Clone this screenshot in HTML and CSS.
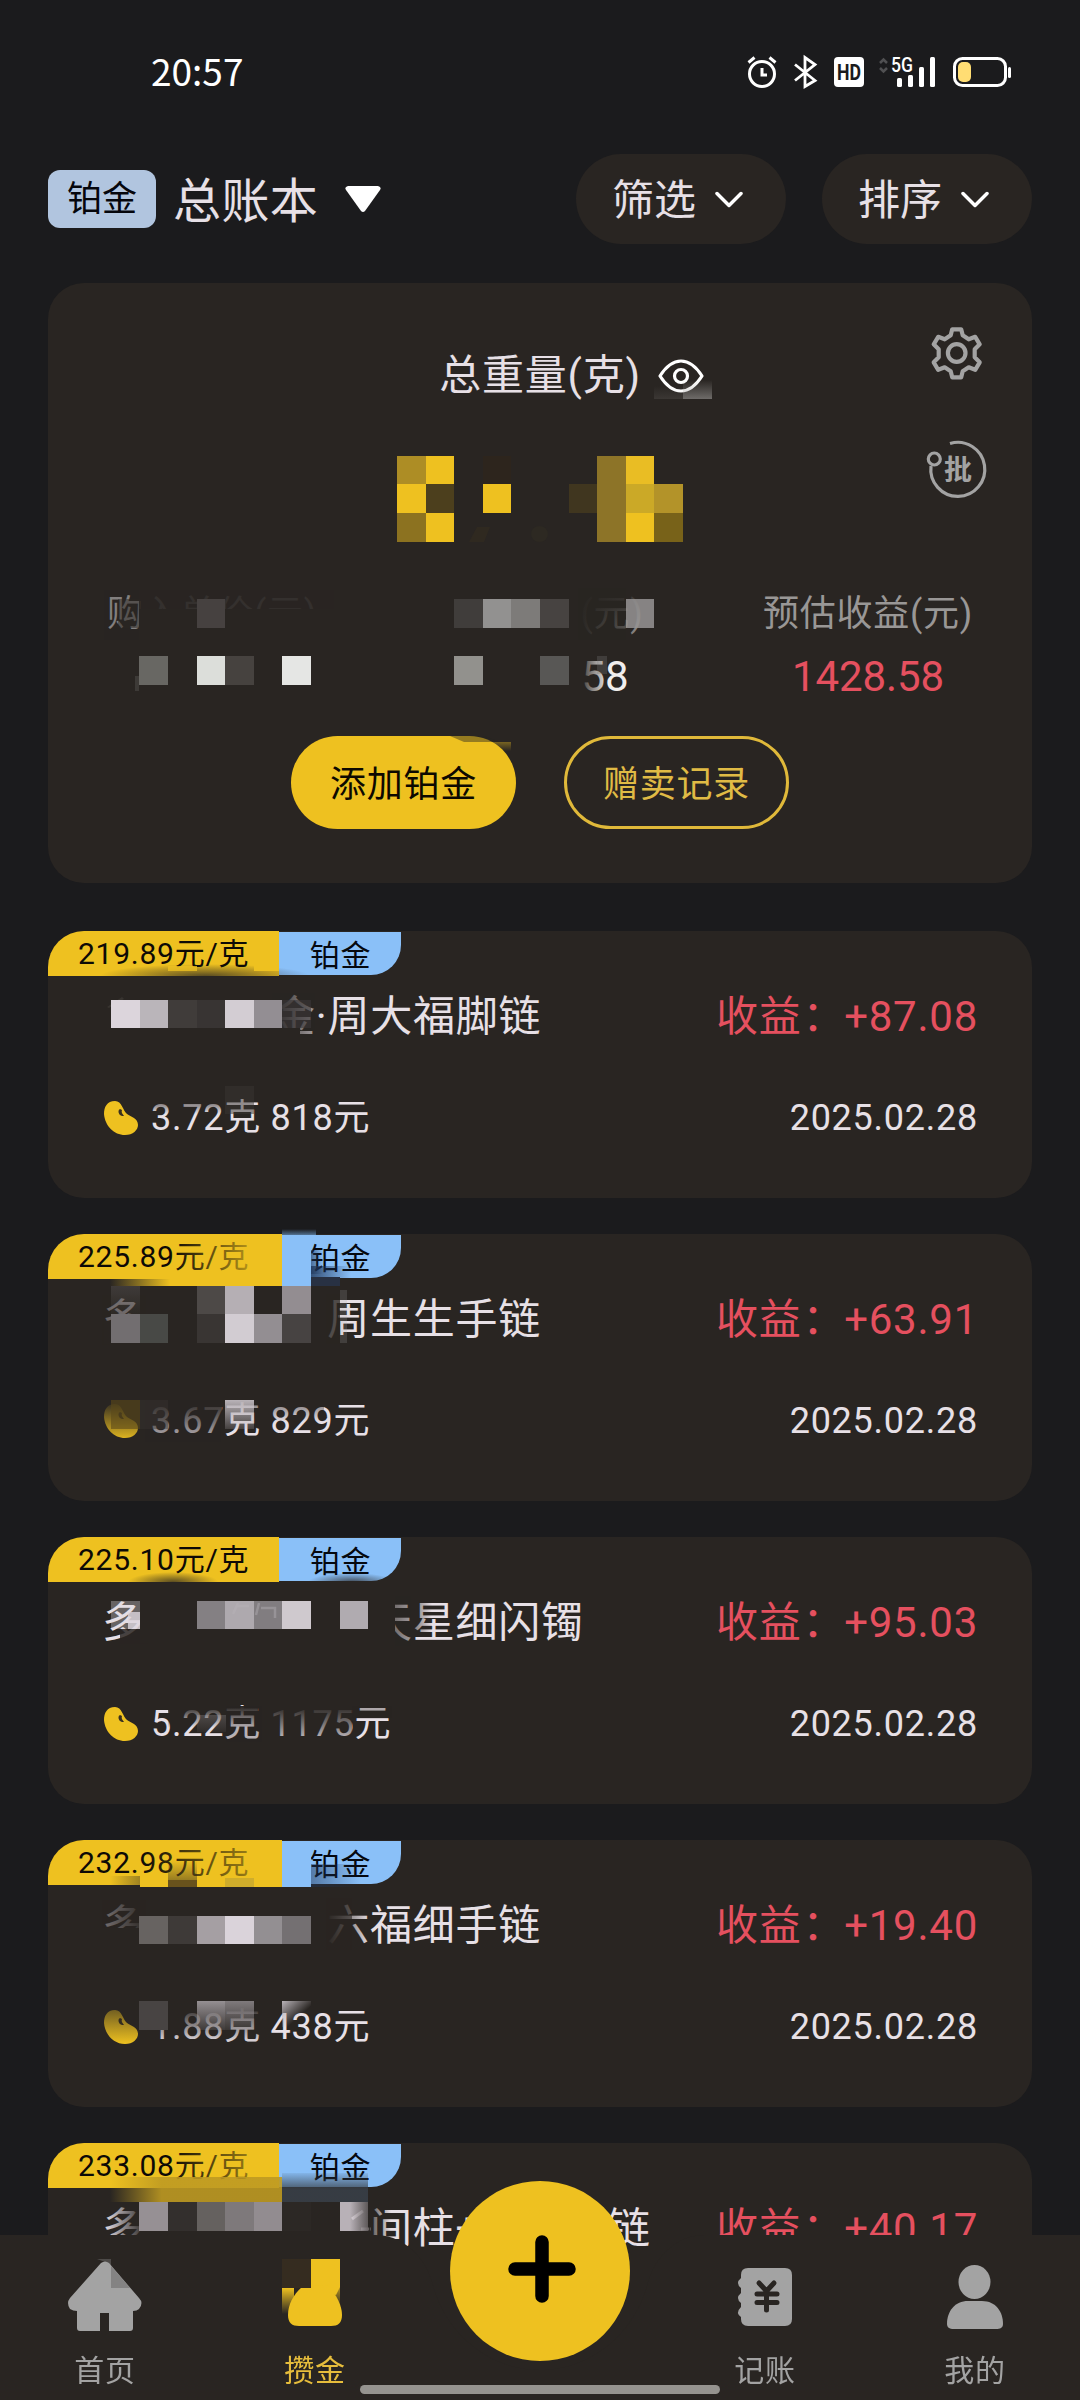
FILE: index.html
```html
<!DOCTYPE html>
<html lang="zh-CN">
<head>
<meta charset="utf-8">
<title>攒金</title>
<link rel="stylesheet" href="styles.css">
</head>
<body>
<svg class="defs" width="0" height="0">
  <defs>
    <linearGradient id="fromLeft"><stop offset="0" stop-color="#292522"/><stop offset="1" stop-color="#292522" stop-opacity="0"/></linearGradient>
    <linearGradient id="fromTop" x1="0" y1="0" x2="0" y2="1"><stop offset="0" stop-color="#292522"/><stop offset="1" stop-color="#292522" stop-opacity="0"/></linearGradient>
    <linearGradient id="fromRight" x1="1" x2="0"><stop offset="0" stop-color="#292522"/><stop offset="1" stop-color="#292522" stop-opacity="0"/></linearGradient>
    <linearGradient id="lightDown" x1="0" y1="0" x2="0" y2="1"><stop offset="0" stop-color="#b9b3b8"/><stop offset="1" stop-color="#b9b3b8" stop-opacity="0.2"/></linearGradient>
    <linearGradient id="lightCorner" x1="0" y1="0" x2=".6" y2=".6"><stop offset="0" stop-color="#b9b3b8"/><stop offset="1" stop-color="#b9b3b8" stop-opacity="0"/></linearGradient>
    <linearGradient id="shade" x1="0" y1="0" x2="0" y2="1"><stop offset="0" stop-color="#292522" stop-opacity="0"/><stop offset="1" stop-color="#292522" stop-opacity=".85"/></linearGradient>
    <radialGradient id="shadow" cx=".5" cy="1" r=".5" gradientTransform="translate(0 -1) scale(1 2)"><stop offset="0" stop-color="#292522" stop-opacity=".75"/><stop offset="1" stop-color="#292522" stop-opacity="0"/></radialGradient>
    <linearGradient id="goldIn"><stop offset="0" stop-color="#eec120" stop-opacity="0"/><stop offset=".35" stop-color="#eec120"/></linearGradient>
    <linearGradient id="goldDimIn"><stop offset="0" stop-color="#be9a22" stop-opacity="0"/><stop offset=".3" stop-color="#be9a22"/></linearGradient>
    <linearGradient id="goldVeil"><stop offset="0" stop-color="#eec120" stop-opacity="0"/><stop offset="1" stop-color="#eec120" stop-opacity=".8"/></linearGradient>
    <linearGradient id="navyIn"><stop offset="0" stop-color="#1f3558"/><stop offset="1" stop-color="#1f3558" stop-opacity="0"/></linearGradient>
    <linearGradient id="navyDown" x1="0" y1="0" x2="0" y2="1"><stop offset="0" stop-color="#394049" stop-opacity=".1"/><stop offset=".6" stop-color="#394049"/></linearGradient>
    <linearGradient id="glow" x1="0" y1="1" x2="0" y2="0"><stop offset="0" stop-color="#5f87b0" stop-opacity=".8"/><stop offset="1" stop-color="#5f87b0" stop-opacity="0"/></linearGradient>
    <linearGradient id="goldDown" x1="0" y1="0" x2="0" y2="1"><stop offset="0" stop-color="#eec120"/><stop offset="1" stop-color="#eec120" stop-opacity="0"/></linearGradient>
    <linearGradient id="whiteUp" x1="0" y1="1" x2="0" y2="0"><stop offset="0" stop-color="#a5a3a1" stop-opacity=".8"/><stop offset="1" stop-color="#a5a3a1" stop-opacity="0"/></linearGradient>
    <symbol id="bean" viewBox="0 0 34 34"><path d="M11 0C3 0 0 6 0 13c1 12 10 21 21 21 8 0 13-5 13-10 0-7-7-8-11-11C19 10 18 0 11 0z" fill="#eec120"/><path d="M16 8c-2 1-2 4 0 6 1 1 3 1 4 1-1-2-3-3-2-6z" fill="#39301f"/></symbol>
    <symbol id="chevron" viewBox="0 0 28 17"><path d="M2 2.500l12 12 12-12" fill="none" stroke="#fff" stroke-width="3.500" stroke-linecap="round" stroke-linejoin="round"/></symbol>
  </defs>
</svg>

<header class="status">
  <span class="clock">20:57</span>
  <svg class="status-icons" viewBox="745 54 270 36">
    <g fill="none" stroke="#fff" stroke-width="3">
      <circle cx="762" cy="74" r="12.500"/><path d="M762 68v7h5M748.500 62.500l6-5M775.500 62.500l-6-5" />
      <path d="M795 64.500l20 16-10 6v-29l10 7-20 16" stroke-width="2.800"/>
      <rect x="954.500" y="58.500" width="51" height="27" rx="8"/>
    </g>
    <rect x="834" y="57" width="30" height="30" rx="4" fill="#fff"/>
    <text class="hd" x="849" y="80" text-anchor="middle" textLength="24" lengthAdjust="spacingAndGlyphs">HD</text>
    <path d="M880 63l3.500-3.500 3.500 3.500M880 68l3.500 3.500 3.500-3.500" fill="none" stroke="#505052" stroke-width="2.500"/>
    <text class="net" x="891" y="72" textLength="22" lengthAdjust="spacingAndGlyphs">5G</text>
    <g fill="#fff"><rect x="897" y="78" width="5" height="9" rx="1.500"/><rect x="908" y="75" width="5" height="12" rx="1.500"/><rect x="919" y="67" width="5" height="20" rx="1.500"/><rect x="930" y="57" width="5" height="30" rx="1.500"/><rect x="1008" y="67" width="3" height="11" rx="1.500"/></g>
    <rect x="958" y="62" width="13" height="20" rx="5" fill="#ffdd73"/>
  </svg>
</header>

<section class="toolbar">
  <span class="metal">铂金</span>
  <span class="book">总账本</span>
  <svg class="triangle" viewBox="0 0 36 27"><path d="M3 0h30q4 1 2 4L20 25q-2 2-4 0L1 4Q-1 1 3 0z" fill="#fff"/></svg>
  <button class="pill first"><span>筛选</span><svg><use href="#chevron"/></svg></button>
  <button class="pill"><span>排序</span><svg><use href="#chevron"/></svg></button>
</section>

<section class="summary">
  <div class="summary-title"><span>总重量(克)</span>
    <svg class="eye" viewBox="0 0 46 34"><path d="M2 17C9 6 16 2 23 2s14 4 21 15C37 28 30 32 23 32S9 28 2 17z" fill="none" stroke="#fff" stroke-width="3.200" stroke-linejoin="round"/><circle cx="23" cy="17" r="6.500" fill="none" stroke="#fff" stroke-width="3.200"/></svg>
  </div>
  <div class="stats">
    <div class="stat"><span class="label">购入单价(元)</span><span class="value"></span></div>
    <div class="stat"><span class="label tail">(元)</span><span class="value tail2">58</span></div>
    <div class="stat"><span class="label">预估收益(元)</span><span class="value red">1428.58</span></div>
  </div>
  <div class="actions"><button class="add">添加铂金</button><button class="log">赠卖记录</button></div>
  <svg class="overlay" viewBox="48 283 984 600">
    <g fill="none" stroke="#a3a3a3" stroke-width="4.200" stroke-linejoin="round">
      <path transform="translate(956.700 353.300)" d="M-4.500-24h9L6-18l6 4 6.500-2.500L23-9l-5 5v8l5 5-4.500 7.500L12 14l-6 4-1.500 6h-9L-6 18l-6-4-6.500 2.500L-23 9l5-5v-8l-5-5 4.500-7.500L-12-14l6-4z"/>
      <circle cx="956.700" cy="353" r="8.800"/>
      <path d="M950 443.500A27 27 0 1 1 931 466" stroke-width="3.200"/><circle cx="934.300" cy="459" r="6" stroke-width="3.200"/>
    </g>
    <text class="batch" x="958" y="480" text-anchor="middle">批</text>
    <rect x="654" y="386" width="29" height="13" fill="url(#whiteUp)" opacity=".18"/><rect x="683" y="380" width="29" height="19" fill="url(#whiteUp)" opacity=".7"/>
    <rect x="397" y="456" width="29" height="28" fill="#ad8d25"/><rect x="426" y="456" width="28" height="28" fill="#eec120"/>
    <rect x="397" y="484" width="29" height="29" fill="#eec120"/><rect x="426" y="484" width="28" height="29" fill="#4c3f1d"/>
    <rect x="397" y="513" width="29" height="29" fill="#8c7220"/><rect x="426" y="513" width="28" height="29" fill="#eec120"/>
    <rect x="483" y="456" width="28" height="28" fill="#2d251d"/><rect x="483" y="484" width="28" height="29" fill="#eec120"/>
    <path d="M469 542l8-15h13l-6 15z" fill="#3a301f" opacity=".4"/><ellipse cx="539.500" cy="534" rx="8.500" ry="8" fill="#2d2922"/>
    <rect x="569" y="484" width="28" height="29" fill="#40361f"/><rect x="597" y="456" width="29" height="86" fill="#8d7428"/>
    <rect x="626" y="456" width="28" height="28" fill="#e9bd24"/><rect x="626" y="484" width="28" height="29" fill="#cba927"/><rect x="626" y="513" width="28" height="29" fill="#eec120"/>
    <rect x="654" y="484" width="29" height="29" fill="#b39329"/><rect x="654" y="513" width="29" height="29" fill="#786219"/>
    <rect x="104" y="590" width="36" height="50" fill="#292522" opacity=".2"/>
    <rect x="139" y="590" width="195" height="50" fill="#292522" opacity=".9"/><rect x="139" y="609" width="195" height="32" fill="#292522"/>
    <rect x="118" y="599" width="22" height="29" fill="#292522" opacity=".5"/><rect x="197" y="599" width="28" height="29" fill="#464140"/>
    <rect x="454" y="599" width="29" height="29" fill="#403d3b"/><rect x="483" y="599" width="28" height="29" fill="#929190"/><rect x="511" y="599" width="29" height="29" fill="#7d7b79"/><rect x="540" y="599" width="29" height="29" fill="#474341"/>
    <rect x="578" y="588" width="70" height="52" fill="url(#fromLeft)"/><rect x="578" y="588" width="70" height="40" fill="url(#fromTop)"/><rect x="578" y="588" width="48" height="52" fill="#292522" opacity=".45"/><rect x="626" y="599" width="28" height="29" fill="#969494" opacity=".85"/>
    <rect x="135" y="676" width="4" height="15" fill="#3d3a37"/>
    <rect x="139" y="656" width="29" height="29" fill="#686763"/><rect x="197" y="656" width="28" height="29" fill="#dcdeda"/><rect x="225" y="656" width="29" height="29" fill="#46423f"/><rect x="282" y="656" width="29" height="29" fill="#e5e6e4"/>
    <rect x="454" y="656" width="29" height="29" fill="#92918d"/><rect x="540" y="656" width="29" height="29" fill="#585755"/>
    <rect x="578" y="656" width="30" height="38" fill="url(#fromLeft)"/><rect x="597" y="656" width="10" height="18" fill="#777" opacity=".3"/>
    <path d="M450 736h34l16 6h-36z" fill="#292522" opacity=".45"/><rect x="483" y="742" width="28" height="9" fill="url(#goldDown)" opacity=".4"/>
  </svg>
</section>

<main class="list">
  <article class="card">
    <div class="tags"><span class="price">219.89元/克</span><span class="kind">铂金</span></div>
    <div class="row title"><span><i class="hide4"></i>金·周大福脚链</span><span class="red">收益<b>：</b>+87.08</span></div>
    <div class="row info"><span><svg class="bean"><use href="#bean"/></svg>3.72克 818元</span><time>2025.02.28</time></div>
    <svg class="overlay" viewBox="48 931 984 267">
      <rect x="100" y="964" width="210" height="12" fill="url(#shadow)"/>
      <rect x="168" y="966" width="29" height="5" fill="#eec120" opacity=".8"/><rect x="254" y="962" width="25" height="9" fill="#eec120"/>
      <rect x="272" y="993" width="44" height="45" fill="url(#fromLeft)"/><rect x="272" y="993" width="43" height="45" fill="#292522" opacity=".35"/><rect x="272" y="1028" width="28" height="12" fill="#292522"/>
      <path d="M107 1007l15-10 2 2-15 9z" fill="#383430"/>
      <rect x="111" y="1000" width="29" height="28" fill="#dcd5dc"/><rect x="140" y="1000" width="28" height="28" fill="#bab5ba"/><rect x="168" y="1000" width="29" height="28" fill="#403c3a"/><rect x="197" y="1000" width="28" height="28" fill="#383433"/><rect x="225" y="1000" width="29" height="28" fill="#d3cdd3"/><rect x="254" y="1000" width="28" height="28" fill="#938e93"/><rect x="282" y="1000" width="29" height="28" fill="#3b3738" opacity=".6"/>
      <rect x="150" y="1098" width="76" height="16" fill="url(#fromTop)" opacity=".8"/><rect x="225" y="1086" width="29" height="28" fill="#393532" opacity=".5"/>
    </svg>
  </article>
  <article class="card">
    <div class="tags"><span class="price">225.89元/克</span><span class="kind">铂金</span></div>
    <div class="row title"><span>多<i class="hide4"></i><i class="dot"></i>周生生手链</span><span class="red">收益<b>：</b>+63.91</span></div>
    <div class="row info"><span><svg class="bean"><use href="#bean"/></svg>3.67克 829元</span><time>2025.02.28</time></div>
    <svg class="overlay" viewBox="48 1234 984 267">
      <rect x="172" y="1238" width="84" height="38" fill="url(#goldVeil)"/><rect x="110" y="1279" width="172" height="7" fill="url(#goldIn)"/>
      <path d="M279 1234h3v52h-3z" fill="#eec120"/><rect x="282" y="1235" width="29" height="51" fill="#8ac0f8"/>
      <rect x="282" y="1229" width="34" height="6" fill="url(#glow)"/>
      <rect x="311" y="1250" width="12" height="24" fill="url(#navyIn)" opacity=".6"/><rect x="311" y="1266" width="40" height="12" fill="url(#navyIn)" opacity=".8"/><rect x="311" y="1277" width="29" height="9" fill="#283143"/>
      <rect x="102" y="1295" width="44" height="50" fill="#292522" opacity=".65"/><rect x="111" y="1286" width="29" height="28" fill="url(#lightDown)" opacity=".15"/><rect x="104" y="1322" width="42" height="22" fill="#292522"/>
      <rect x="197" y="1286" width="28" height="28" fill="#4d4947"/><rect x="225" y="1286" width="29" height="28" fill="#b5afb4"/><rect x="282" y="1286" width="29" height="28" fill="#938d91"/>
      <rect x="111" y="1314" width="29" height="29" fill="#726e70"/><rect x="140" y="1314" width="28" height="29" fill="#484946"/><rect x="197" y="1314" width="28" height="29" fill="#393533"/><rect x="225" y="1314" width="29" height="29" fill="#d2ccd2"/><rect x="254" y="1314" width="28" height="29" fill="#938e92"/><rect x="282" y="1314" width="29" height="29" fill="#474342"/>
      <rect x="326" y="1294" width="14" height="50" fill="#292522" opacity=".8"/><rect x="340" y="1290" width="7" height="53" fill="#aaa" opacity=".2"/>
      <rect x="102" y="1400" width="120" height="42" fill="url(#fromTop)"/><rect x="145" y="1400" width="76" height="42" fill="#292522" opacity=".2"/><rect x="111" y="1400" width="29" height="29" fill="#5c4919" opacity=".6"/><rect x="140" y="1400" width="28" height="29" fill="#393532" opacity=".4"/>
      <rect x="225" y="1400" width="29" height="29" fill="url(#lightDown)"/><rect x="254" y="1400" width="70" height="22" fill="url(#fromTop)" opacity=".6"/>
    </svg>
  </article>
  <article class="card">
    <div class="tags"><span class="price">225.10元/克</span><span class="kind">铂金</span></div>
    <div class="row title"><span>多<i class="hide4"></i><i class="dot"></i><i class="hide1"></i>天星细闪镯</span><span class="red">收益<b>：</b>+95.03</span></div>
    <div class="row info"><span><svg class="bean"><use href="#bean"/></svg>5.22克 1175元</span><time>2025.02.28</time></div>
    <svg class="overlay" viewBox="48 1537 984 267">
      <rect x="128" y="1572" width="90" height="10" fill="url(#shadow)"/><rect x="308" y="1573" width="88" height="9" fill="url(#shadow)"/>
      <rect x="111" y="1601" width="29" height="28" fill="#ddd6dd" opacity=".35"/><rect x="128" y="1612" width="12" height="17" fill="#ddd6dd" opacity=".8"/><rect x="120" y="1629" width="28" height="15" fill="#292522" opacity=".85"/><rect x="140" y="1598" width="8" height="45" fill="#292522"/>
      <rect x="197" y="1601" width="28" height="28" fill="#848083"/><rect x="225" y="1601" width="29" height="28" fill="#aea9ae"/><rect x="254" y="1601" width="28" height="28" fill="#817d80"/><rect x="282" y="1601" width="29" height="28" fill="#cfc9ce"/>
      <path d="M238 1603l-5 11m4-8h12m10-3l-3 12m5-7h14v10" fill="none" stroke="#b9b3b9" stroke-width="2.500" opacity=".4"/>
      <rect x="340" y="1601" width="28" height="28" fill="#b0abb0"/>
      <rect x="368" y="1596" width="45" height="50" fill="url(#fromLeft)"/><rect x="368" y="1596" width="43" height="50" fill="#292522" opacity=".35"/><rect x="368" y="1596" width="27" height="50" fill="#292522"/><rect x="412" y="1596" width="20" height="36" fill="url(#fromLeft)" opacity=".6"/>
      <rect x="168" y="1706" width="90" height="22" fill="url(#fromTop)"/><rect x="197" y="1715" width="29" height="17" fill="url(#lightDown)" opacity=".25"/><rect x="226" y="1706" width="36" height="36" fill="#292522" opacity=".25"/>
      <rect x="268" y="1706" width="84" height="42" fill="url(#fromTop)"/><rect x="352" y="1706" width="40" height="12" fill="#292522" opacity=".3"/>
    </svg>
  </article>
  <article class="card">
    <div class="tags"><span class="price">232.98元/克</span><span class="kind">铂金</span></div>
    <div class="row title"><span>多<i class="hide4"></i><i class="dot"></i>六福细手链</span><span class="red">收益<b>：</b>+19.40</span></div>
    <div class="row info"><span><svg class="bean"><use href="#bean"/></svg>1.88克 438元</span><time>2025.02.28</time></div>
    <svg class="overlay" viewBox="48 1840 984 267">
      <rect x="140" y="1846" width="114" height="34" fill="url(#goldVeil)" opacity=".8"/><rect x="110" y="1876" width="30" height="9" fill="url(#fromRight)" opacity=".4"/>
      <rect x="140" y="1879" width="28" height="8" fill="#eec120"/><rect x="168" y="1860" width="29" height="27" fill="url(#shade)" opacity=".7"/><rect x="168" y="1880" width="29" height="7" fill="#68521c"/><rect x="197" y="1880" width="85" height="7" fill="#eec120"/><rect x="225" y="1878" width="29" height="9" fill="#cfad2b"/>
      <path d="M279 1840h3v47h-3z" fill="#eec120"/><rect x="282" y="1841" width="29" height="46" fill="#8ac0f8"/><rect x="311" y="1864" width="50" height="23" fill="url(#navyIn)" opacity=".5"/>
      <rect x="102" y="1900" width="46" height="50" fill="url(#fromRight)"/><rect x="102" y="1900" width="44" height="50" fill="#292522" opacity=".6"/><rect x="102" y="1928" width="44" height="22" fill="#292522"/>
      <rect x="139" y="1916" width="29" height="28" fill="#676361"/><rect x="168" y="1916" width="29" height="28" fill="#3e3a38"/><rect x="197" y="1916" width="28" height="28" fill="#a59fa3"/><rect x="225" y="1916" width="29" height="28" fill="#dad3da"/><rect x="254" y="1916" width="28" height="28" fill="#938f92"/><rect x="282" y="1916" width="29" height="28" fill="#747072"/>
      <rect x="326" y="1898" width="44" height="52" fill="url(#fromLeft)"/><rect x="326" y="1898" width="26" height="52" fill="#292522" opacity=".6"/>
      <rect x="100" y="2006" width="40" height="38" fill="url(#fromTop)" opacity=".7"/><rect x="145" y="2006" width="118" height="38" fill="url(#fromTop)"/>
      <rect x="139" y="2001" width="29" height="29" fill="#484443"/><rect x="197" y="2001" width="28" height="29" fill="url(#lightDown)" opacity=".75"/><rect x="225" y="2001" width="29" height="29" fill="url(#lightDown)" opacity=".6"/><rect x="282" y="2001" width="29" height="26" fill="url(#lightCorner)"/>
    </svg>
  </article>
  <article class="card">
    <div class="tags"><span class="price">233.08元/克</span><span class="kind">铂金</span></div>
    <div class="row title"><span>多<i class="hide4"></i><i class="dot"></i><i class="hide1"></i>间柱+<i class="hide3"></i>链</span><span class="red">收益<b>：</b>+40.17</span></div>
    <svg class="overlay" viewBox="48 2143 984 267">
      <rect x="170" y="2148" width="84" height="30" fill="url(#goldVeil)" opacity=".8"/>
      <rect x="110" y="2177" width="172" height="25" fill="url(#goldDimIn)" opacity=".9"/>
      <rect x="282" y="2173" width="86" height="29" fill="url(#navyDown)" opacity=".85"/>
      <rect x="104" y="2202" width="42" height="44" fill="url(#fromRight)"/>
      <rect x="139" y="2202" width="29" height="29" fill="#969094"/><rect x="168" y="2202" width="29" height="29" fill="#332f2d"/><rect x="197" y="2202" width="28" height="29" fill="#65615f"/><rect x="225" y="2202" width="29" height="29" fill="#7e797b"/><rect x="254" y="2202" width="28" height="29" fill="#928c90"/><rect x="282" y="2202" width="29" height="29" fill="#2c2825"/>
      <rect x="340" y="2202" width="28" height="29" fill="#b8b1b7"/><path d="M352 2219l11-8M361 2229h10" fill="none" stroke="#ddd5dc" stroke-width="3"/><rect x="350" y="2202" width="20" height="29" fill="url(#fromRight)" opacity=".7"/><rect x="369" y="2206" width="22" height="44" fill="url(#fromLeft)" opacity=".8"/>
    </svg>
  </article>
</main>

<nav class="nav">
  <svg class="nav-bg" viewBox="0 2235 1080 165"><path d="M0 2235h372c20 0 30 6 38 13 14 12 18 22 22 34 12 50 56 88 108 88s96-38 108-88c4-12 8-22 22-34 8-7 18-13 38-13h372v165H0z" fill="#292522"/></svg>
  <a class="tab"><svg viewBox="65 2255 80 80"><path d="M101 2263q4-3 8 0l30 35q5 5 0 11-2 2-6 2v17q0 3-3 3h-21v-18h-9v18H80q-3 0-3-3v-17q-4 0-7-2-4-6 0-11z" fill="#a3a3a3"/><path d="M111 2266v22h19z" fill="#292522" opacity=".25"/><path d="M97 2259h14v8l-6-5z" fill="#a3a3a3" opacity=".3"/></svg><span>首页</span></a>
  <a class="tab active"><svg viewBox="275 2255 80 80"><path d="M311 2259h29v28l-4 8-25-7z" fill="#eec120"/><rect x="282" y="2288" width="12" height="26" fill="url(#goldDown)"/><rect x="328" y="2284" width="12" height="24" fill="url(#goldDown)" opacity=".8"/><path d="M302 2287q13-3 26-1c9 9 14 20 14 29 0 8-4 11-11 11h-32c-7 0-11-3-11-11 0-10 5-20 14-28z" fill="#eec120"/><rect x="282" y="2259" width="29" height="29" fill="#352c20"/></svg><span>攒金</span></a>
  <span class="middle"></span>
  <a class="tab"><svg viewBox="725 2255 80 80"><path d="M748 2268h37q7 0 7 7v44q0 7-7 7h-37q-7 0-7-7v-2q-6-4 0-10v-4q-6-5 0-10v-5q-6-5 0-10v-3q0-7 7-7z" fill="#a3a3a3"/><path d="M759 2283l7.500 8 7.500-8M757 2294h20M757 2302.500h20M766.500 2293v17" fill="none" stroke="#292522" stroke-width="5" stroke-linecap="round"/></svg><span>记账</span></a>
  <a class="tab"><svg viewBox="935 2255 80 80"><ellipse cx="974.500" cy="2282" rx="16" ry="17" fill="#a3a3a3"/><path d="M968 2301h14c14 0 21 11 21 23 0 4-3 5-7 5h-42c-5 0-7-2-7-5 0-13 8-23 21-23z" fill="#a3a3a3"/></svg><span>我的</span></a>
  <button class="fab"><svg viewBox="0 0 180 180"><path d="M92 61v54M65 88h54" stroke="#000" stroke-width="13.500" stroke-linecap="round"/></svg></button>
  <span class="handle"></span>
</nav>
</body>
</html>
```
FILE: styles.css
```css
* { box-sizing: border-box; }
html, body { margin: 0; height: 2400px; overflow: hidden; }
body {
  background: #1b1b1d;
  color: #e7e0e6;
  font-family: Roboto, "Noto Sans CJK SC", sans-serif;
  font-size: 42px;
  letter-spacing: .75px;
}
button { border: 0; padding: 0; font: inherit; letter-spacing: inherit; color: inherit; }
i { display: inline-block; height: 1px; }
.defs { position: absolute; }
.status { height: 144px; display: flex; justify-content: space-between; padding: 0 65px 0 151px; color: #fff; }
.clock { font: 37px/44px "Noto Sans CJK SC", sans-serif; letter-spacing: 0; margin-top: 48px; }
.status-icons { width: 270px; height: 36px; margin-top: 54px; }
.hd { font: 700 22px Roboto, sans-serif; letter-spacing: 0; fill: #1b1b1d; }
.net { font: 500 20px Roboto, sans-serif; letter-spacing: 0; fill: #fff; }

.toolbar { height: 139px; padding: 10px 48px 39px; display: flex; align-items: center; }
.metal { width: 108px; height: 58px; border-radius: 12px; background: #b1c5df; color: #05060c; font-size: 35px; line-height: 60px; text-align: center; letter-spacing: 0; }
.book { margin-left: 17px; padding-top: 5px; font-size: 48px; line-height: 60px; letter-spacing: .4px; }
.triangle { width: 36px; height: 27px; margin-left: 27px; }
.pill { width: 210px; height: 90px; border-radius: 45px; background: #292522; display: flex; align-items: center; padding-left: 36px; margin-left: 36px; letter-spacing: 0; }
.pill span { line-height: 60px; padding-top: 3px; }
.pill.first { margin-left: auto; }
.pill svg { width: 28px; height: 17px; margin-left: 19px; }

.summary { position: relative; height: 600px; margin: 0 48px 48px; border-radius: 36px; background: #292522; padding-top: 63px; }
.summary-title { display: flex; align-items: center; justify-content: center; height: 56px; padding-left: 63px; }
.summary-title span { line-height: 56px; padding-top: 3px; }
.eye { width: 46px; height: 34px; margin: 3px 0 0 17px; }
.stats { display: flex; justify-content: space-around; margin-top: 187px; }
.stat { width: 328px; text-align: center; }
.label, .value { display: block; }
.label { font-size: 36px; height: 50px; line-height: 50px; color: #999796; }
.value { height: 50px; line-height: 50px; margin-top: 13px; letter-spacing: -.1px; }
.tail { padding-left: 144px; }
.tail2 { padding-left: 130px; color: #f0eeee; }
.red { color: #e5505f; }
.red b { font-weight: 400; padding-left: 1px; letter-spacing: -.25px; }
.actions { display: flex; justify-content: center; gap: 48px; margin-top: 34px; }
.actions button { width: 225px; height: 93px; border-radius: 47px; font-size: 36px; padding-bottom: 4px; }
.add { background: #eec120; color: #0d0900; }
.actions .log { background: none; border: 3px solid #e0b93a; color: #e0bb45; }
.batch { font: 700 28px "Noto Sans CJK SC", sans-serif; letter-spacing: 0; fill: #a3a3a3; }
.overlay { position: absolute; left: 0; top: 0; width: 100%; height: 100%; overflow: visible; pointer-events: none; }

.list { display: flex; flex-direction: column; gap: 36px; margin: 0 48px; }
.card { position: relative; flex: none; height: 267px; border-radius: 36px; background: #292522; }
.tags { display: flex; height: 45px; font-size: 30px; color: #0d0a06; line-height: 45px; }
.price { width: 231px; padding-left: 30px; background: #eec120; border-top-left-radius: 36px; }
.kind { width: 122px; height: 43px; margin-top: 1px; padding-left: 1px; text-align: center; background: #8ac0f8; border-bottom-right-radius: 30px; line-height: 48px; color: #05080f; }
.row { display: flex; justify-content: space-between; align-items: center; height: 60px; line-height: 60px; padding: 0 54px; white-space: nowrap; }
.title { margin-top: 11px; }
.info { margin-top: 41px; font-size: 36px; }
.info span { display: flex; align-items: center; }
.bean { width: 34px; height: 34px; margin: 0 13px 0 2px; }
.hide1 { width: 42.75px; }
.hide3 { width: 128px; }
.hide4 { width: 171px; }
.dot { width: 11.500px; }

.nav { position: fixed; left: 0; bottom: 0; width: 1080px; height: 165px; display: flex; font-size: 30px; color: #a3a3a3; }
.nav-bg { position: absolute; inset: 0; width: 1080px; height: 165px; }
.tab { position: relative; width: 210px; padding-top: 20px; display: flex; flex-direction: column; align-items: center; }
.tab svg { width: 80px; height: 80px; }
.tab span { line-height: 40px; margin-top: 16px; }
.active { color: #e6bd3c; }
.middle { width: 240px; }
.fab { position: absolute; left: 450px; top: -54px; width: 180px; height: 180px; border-radius: 50%; background: #eec120; }
.fab svg { display: block; width: 180px; height: 180px; }
.handle { position: absolute; left: 360px; top: 150px; width: 360px; height: 9px; border-radius: 5px; background: #95938f; }
```
